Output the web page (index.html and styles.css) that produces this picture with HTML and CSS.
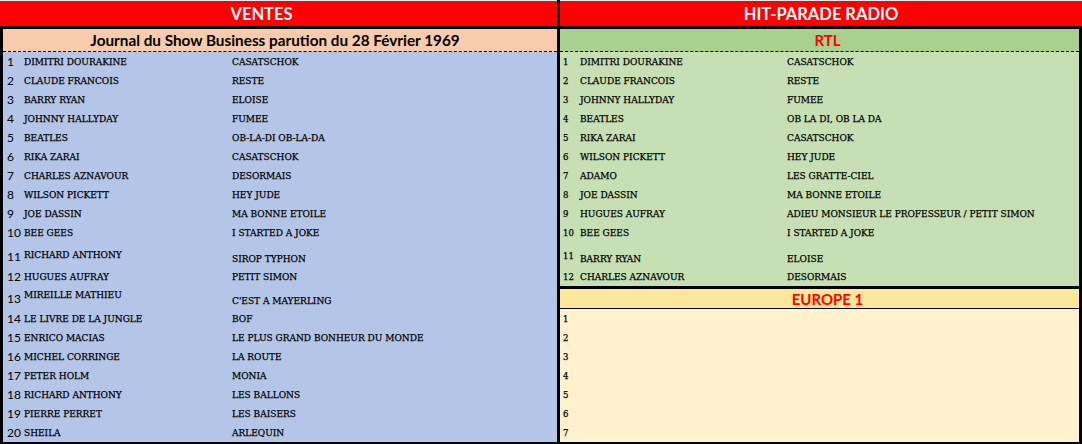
FILE: index.html
```html
<!DOCTYPE html>
<html lang="fr">
<head>
<meta charset="utf-8">
<title>Ventes et Hit-Parade Radio 1969</title>
<link rel="stylesheet" href="styles.css">
</head>
<body>
<div class="page">
  <section class="panel panel-left">
    <div class="title title-ventes">VENTES</div>
    <div class="body body-left">
      <div class="sub sub-peach">Journal du Show Business parution du 28 Février 1969</div>
      <div class="rows rows-blue">
        <div class="row"><span class="num">1</span><span class="artist">DIMITRI DOURAKINE</span><span class="song">CASATSCHOK</span></div>
        <div class="row"><span class="num">2</span><span class="artist">CLAUDE FRANCOIS</span><span class="song">RESTE</span></div>
        <div class="row"><span class="num">3</span><span class="artist">BARRY RYAN</span><span class="song">ELOISE</span></div>
        <div class="row"><span class="num">4</span><span class="artist">JOHNNY HALLYDAY</span><span class="song">FUMEE</span></div>
        <div class="row"><span class="num">5</span><span class="artist">BEATLES</span><span class="song">OB-LA-DI OB-LA-DA</span></div>
        <div class="row"><span class="num">6</span><span class="artist">RIKA ZARAI</span><span class="song">CASATSCHOK</span></div>
        <div class="row"><span class="num">7</span><span class="artist">CHARLES AZNAVOUR</span><span class="song">DESORMAIS</span></div>
        <div class="row"><span class="num">8</span><span class="artist">WILSON PICKETT</span><span class="song">HEY JUDE</span></div>
        <div class="row"><span class="num">9</span><span class="artist">JOE DASSIN</span><span class="song">MA BONNE ETOILE</span></div>
        <div class="row"><span class="num">10</span><span class="artist">BEE GEES</span><span class="song">I STARTED A JOKE</span></div>
        <div class="row row-tall row-tall-a"><span class="num">11</span><span class="artist">RICHARD ANTHONY</span><span class="song">SIROP TYPHON</span></div>
        <div class="row"><span class="num">12</span><span class="artist">HUGUES AUFRAY</span><span class="song">PETIT SIMON</span></div>
        <div class="row row-tall row-tall-b"><span class="num">13</span><span class="artist">MIREILLE MATHIEU</span><span class="song">C'EST A MAYERLING</span></div>
        <div class="row"><span class="num">14</span><span class="artist">LE LIVRE DE LA JUNGLE</span><span class="song">BOF</span></div>
        <div class="row"><span class="num">15</span><span class="artist">ENRICO MACIAS</span><span class="song">LE PLUS GRAND BONHEUR DU MONDE</span></div>
        <div class="row"><span class="num">16</span><span class="artist">MICHEL CORRINGE</span><span class="song">LA ROUTE</span></div>
        <div class="row"><span class="num">17</span><span class="artist">PETER HOLM</span><span class="song">MONIA</span></div>
        <div class="row"><span class="num">18</span><span class="artist">RICHARD ANTHONY</span><span class="song">LES BALLONS</span></div>
        <div class="row"><span class="num">19</span><span class="artist">PIERRE PERRET</span><span class="song">LES BAISERS</span></div>
        <div class="row"><span class="num">20</span><span class="artist">SHEILA</span><span class="song">ARLEQUIN</span></div>
      </div>
    </div>
  </section>
  <section class="panel panel-right">
    <div class="title title-radio">HIT-PARADE RADIO</div>
    <div class="body body-right">
      <div class="sub sub-green">RTL</div>
      <div class="rows rows-green">
        <div class="row"><span class="num">1</span><span class="artist">DIMITRI DOURAKINE</span><span class="song">CASATSCHOK</span></div>
        <div class="row"><span class="num">2</span><span class="artist">CLAUDE FRANCOIS</span><span class="song">RESTE</span></div>
        <div class="row"><span class="num">3</span><span class="artist">JOHNNY HALLYDAY</span><span class="song">FUMEE</span></div>
        <div class="row"><span class="num">4</span><span class="artist">BEATLES</span><span class="song">OB LA DI, OB LA DA</span></div>
        <div class="row"><span class="num">5</span><span class="artist">RIKA ZARAI</span><span class="song">CASATSCHOK</span></div>
        <div class="row"><span class="num">6</span><span class="artist">WILSON PICKETT</span><span class="song">HEY JUDE</span></div>
        <div class="row"><span class="num">7</span><span class="artist">ADAMO</span><span class="song">LES GRATTE-CIEL</span></div>
        <div class="row"><span class="num">8</span><span class="artist">JOE DASSIN</span><span class="song">MA BONNE ETOILE</span></div>
        <div class="row"><span class="num">9</span><span class="artist">HUGUES AUFRAY</span><span class="song">ADIEU MONSIEUR LE PROFESSEUR / PETIT SIMON</span></div>
        <div class="row"><span class="num">10</span><span class="artist">BEE GEES</span><span class="song">I STARTED A JOKE</span></div>
        <div class="row row-tall row-tall-c"><span class="num">11</span><span class="artist">BARRY RYAN</span><span class="song">ELOISE</span></div>
        <div class="row"><span class="num">12</span><span class="artist">CHARLES AZNAVOUR</span><span class="song">DESORMAIS</span></div>
      </div>
      <div class="sub sub-yellow">EUROPE 1</div>
      <div class="rows rows-cream">
        <div class="row"><span class="num">1</span><span class="artist"></span><span class="song"></span></div>
        <div class="row"><span class="num">2</span><span class="artist"></span><span class="song"></span></div>
        <div class="row"><span class="num">3</span><span class="artist"></span><span class="song"></span></div>
        <div class="row"><span class="num">4</span><span class="artist"></span><span class="song"></span></div>
        <div class="row"><span class="num">5</span><span class="artist"></span><span class="song"></span></div>
        <div class="row"><span class="num">6</span><span class="artist"></span><span class="song"></span></div>
        <div class="row"><span class="num">7</span><span class="artist"></span><span class="song"></span></div>
      </div>
    </div>
  </section>
</div>
</body>
</html>
```

FILE: styles.css
```css
html, body {
  margin: 0;
  padding: 0;
  background: #ffffff;
}

.page {
  display: flex;
  width: 1082px;
  height: 444px;
  overflow: hidden;
}

.panel {
  display: flex;
  flex-direction: column;
}

.panel-left {
  width: 557px;
  border-right: 3px solid #000;
}

.panel-right {
  width: 522px;
}

.title {
  height: 26px;
  background: #ff0000;
  color: #ffffff;
  font-family: Lato, "Liberation Sans", sans-serif;
  font-weight: 700;
  font-size: 16.5px;
  display: flex;
  align-items: center;
  justify-content: center;
  box-sizing: border-box;
  border-top: 1px solid #e8e8e8;
}

.title-ventes {
  padding-right: 34px;
}

.body {
  flex: 1;
  display: flex;
  flex-direction: column;
  border-top: 3px solid #000;
  border-bottom: 2px solid #000;
}

.body-left {
  border-left: 3px solid #000;
}

.body-right {
  border-right: 3px solid #000;
}

.sub {
  display: flex;
  align-items: center;
  justify-content: center;
  font-family: Lato, "Liberation Sans", sans-serif;
  font-weight: 700;
  box-sizing: border-box;
}

.sub-peach {
  height: 23px;
  background: #f8cbad;
  color: #000;
  font-size: 15.3px;
  padding-right: 10px;
  border-bottom: 1px dashed #000;
}

.sub-green {
  height: 23px;
  background: #a9d08e;
  color: #ff0000;
  font-size: 15px;
  padding-left: 16px;
  border-bottom: 1px dashed #000;
}

.sub-yellow {
  height: 23px;
  background: #ffe699;
  color: #ff0000;
  font-size: 15px;
  padding-left: 16px;
  border-top: 3px solid #000;
  border-bottom: 1px solid #000;
}

.rows {
  display: flex;
  flex-direction: column;
}

.rows-blue {
  background: #b4c6e7;
  flex: 1;
  padding-left: 4px;
}

.rows-green {
  background: #c6e0b4;
  padding-left: 3px;
}

.rows-cream {
  background: #fff2cc;
  flex: 1;
  padding-left: 3px;
}

.row {
  display: grid;
  grid-template-columns: 17px 208px 1fr;
  height: 19px;
  align-items: center;
  font-family: "DejaVu Serif Condensed", "DejaVu Serif", serif;
  font-size: 10px;
  color: #000;
  white-space: nowrap;
  -webkit-text-stroke: 0.25px #000;
}

.rows-green .row,
.rows-cream .row {
  grid-template-columns: 17px 207px 1fr;
}

.rows-blue .num {
  font-family: Lato, "Liberation Sans", sans-serif;
  font-size: 12px;
  color: #000;
  -webkit-text-stroke: 0;
}

.rows-green .num,
.rows-cream .num {
  font-size: 9.5px;
}

.row-tall {
  align-items: end;
  padding-bottom: 3px;
  box-sizing: border-box;
}

.row-tall-a {
  height: 25px;
}

.row-tall-a .artist {
  padding-bottom: 4px;
}

.row-tall-b {
  height: 23px;
}

.row-tall-b .artist {
  padding-bottom: 6px;
}

.row-tall-c {
  height: 25px;
}

.row-tall-c .num {
  padding-bottom: 3px;
}
```
